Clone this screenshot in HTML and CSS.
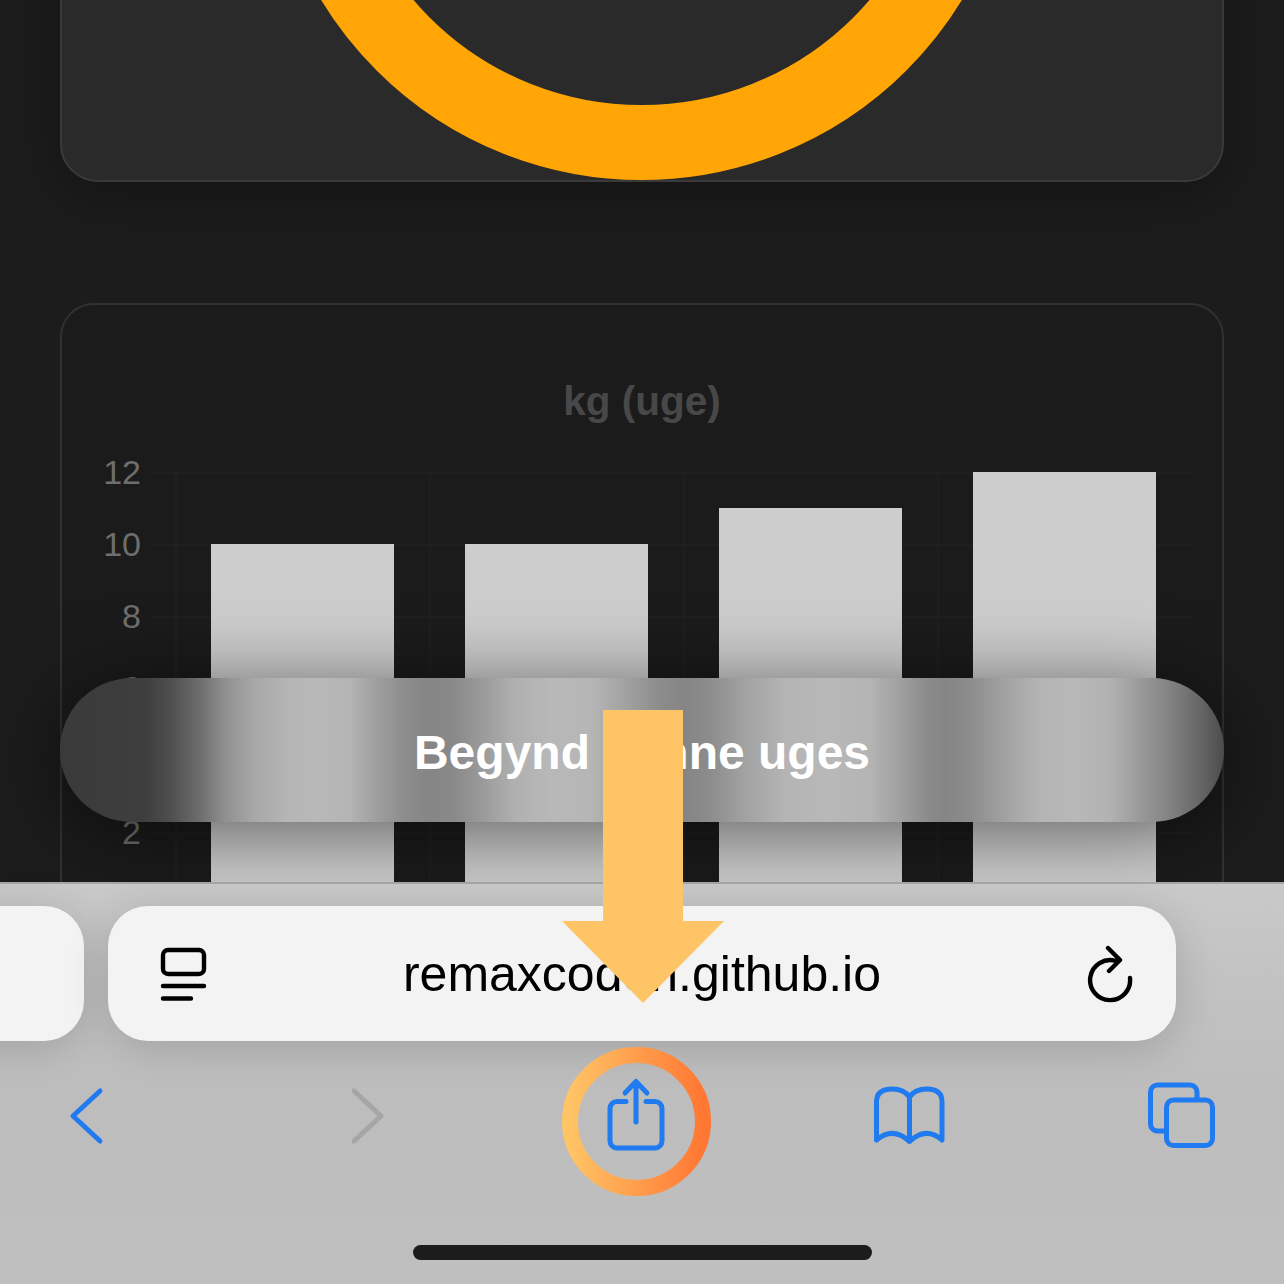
FILE: index.html
```html
<!DOCTYPE html>
<html lang="da">
<head>
<meta charset="utf-8">
<title>Begynd denne uges</title>
<link rel="stylesheet" href="styles.css">
</head>
<body>
<div class="screen">
  <main class="content">
    <section class="card ring-card">
      <svg class="ring" viewBox="0 0 750 750" aria-hidden="true">
        <circle cx="374.5" cy="375" r="337.5" class="ring-stroke"/>
      </svg>
    </section>
    <section class="card chart-card">
      <h2 class="chart-title">kg (uge)</h2>
      <div class="chart">
        <div class="axis">
          <span class="tick">12</span>
          <span class="tick">10</span>
          <span class="tick">8</span>
          <span class="tick">6</span>
          <span class="tick">4</span>
          <span class="tick">2</span>
          <span class="tick">0</span>
        </div>
        <div class="grid-lines">
          <div class="plot">
            <div class="bar" style="height:360px"></div>
            <div class="bar" style="height:360px"></div>
            <div class="bar" style="height:396px"></div>
            <div class="bar" style="height:432px"></div>
          </div>
        </div>
      </div>
    </section>
  </main>

  <button class="cta"><span class="cta-label">Begynd denne uges</span></button>

  <footer class="toolbar">
    <div class="address-row">
      <div class="pill pill-side"></div>
      <div class="pill pill-main">
        <svg class="ico-reader" viewBox="159 946 50 56" aria-hidden="true">
          <rect x="163" y="950" width="41" height="24" rx="5" class="ink"/>
          <path d="M163 986H204M163 998.5H191" class="ink"/>
        </svg>
        <span class="url">remaxcoden.github.io</span>
        <svg class="ico-reload" viewBox="1084 942 50 58" aria-hidden="true">
          <path d="M1130 975A20 20 0 1 1 1116 958L1120 957M1108 945L1120 957L1109 968" class="ink"/>
        </svg>
      </div>
    </div>
    <nav class="nav-row">
      <svg class="nav-cell" width="173" height="149" viewBox="0 1047 173 149" aria-hidden="true">
        <path d="M100 1091L73 1116L100 1141" class="blue"/>
      </svg>
      <svg class="nav-cell" width="389" height="149" viewBox="173 1047 389 149" aria-hidden="true">
        <path d="M354 1091L381 1116L354 1141" class="grey"/>
      </svg>
      <svg class="nav-cell" width="149" height="149" viewBox="562 1047 149 149" aria-hidden="true">
        <defs>
          <linearGradient id="ringGrad" x1="0" x2="1" y1="0" y2="0">
            <stop offset="0" stop-color="#ffc466"/>
            <stop offset="1" stop-color="#ff7733"/>
          </linearGradient>
        </defs>
        <circle cx="636.5" cy="1121.5" r="66.5" fill="none" stroke="url(#ringGrad)" stroke-width="16"/>
        <path d="M626 1101.5H617a7 7 0 0 0-7 7V1141a7 7 0 0 0 7 7H655a7 7 0 0 0 7-7V1108.5a7 7 0 0 0-7-7H646" class="blue"/>
        <path d="M636 1122V1082M625 1093L636 1081.5L647 1093" class="blue"/>
      </svg>
      <svg class="nav-cell" width="396" height="149" viewBox="711 1047 396 149" aria-hidden="true">
        <path d="M876.5 1140V1102Q876.5 1089 892 1089Q904 1089 909.5 1097V1141.5M876.5 1140Q893 1126 909.5 1141.5Q926 1126 942 1140V1102Q942 1089 927 1089Q915 1089 909.5 1097" class="blue"/>
      </svg>
      <svg class="nav-cell" width="149" height="149" viewBox="1107 1047 149 149" aria-hidden="true">
        <rect x="1166.5" y="1100" width="46" height="45.5" rx="7" class="blue"/>
        <path d="M1197 1098V1092a7 7 0 0 0-7-7H1157.500a7 7 0 0 0-7 7V1124a7 7 0 0 0 7 7H1164" class="blue"/>
      </svg>
    </nav>
    <div class="home-bar"></div>
  </footer>

  <svg class="pointer" viewBox="0 0 162 293" aria-hidden="true">
    <polygon points="41,0 121,0 121,211 162,211 81,293 0,211 41,211"/>
  </svg>
</div>
</body>
</html>
```
FILE: styles.css
```css
* { box-sizing: border-box; }

html, body {
  margin: 0;
  padding: 0;
  background: #1c1c1c;
}

.screen {
  position: relative;
  width: 1284px;
  height: 1284px;
  overflow: hidden;
  font-family: "Liberation Sans", Arial, sans-serif;
}

.content {
  display: flex;
  flex-direction: column;
  gap: 121px;
  padding: 0 60px;
}

.card {
  border: 2px solid #3a3a3a;
  border-radius: 38px;
}

.ring-card {
  display: flex;
  justify-content: center;
  align-items: flex-end;
  height: 300px;
  margin-top: -118px;
  overflow: hidden;
  background: #2a2a2a;
  box-shadow: 0 12px 60px rgba(0, 0, 0, 0.3);
}

.ring {
  flex: none;
  width: 750px;
  height: 750px;
}

.ring-stroke {
  fill: none;
  stroke: #ffa505;
  stroke-width: 75;
}

.chart-card {
  height: 1000px;
  padding-top: 73px;
  border-color: #313131;
  border-radius: 34px;
  background: #1b1b1b;
}

.chart-title {
  margin: 0;
  font-size: 40.5px;
  line-height: 46px;
  font-weight: 700;
  text-align: center;
  color: #484848;
}

.chart {
  display: flex;
  align-items: flex-start;
  margin-top: 48px;
}

.axis {
  display: flex;
  flex-direction: column;
  width: 79px;
  margin-top: -36px;
}

.tick {
  height: 72px;
  font-size: 34px;
  line-height: 72px;
  text-align: right;
  color: #6e6e6e;
}

.grid-lines {
  width: 1041px;
  margin-left: 9px;
  padding-left: 25px;
  background-image: linear-gradient(to bottom, #1f1f1f 2px, transparent 2px);
  background-size: 100% 72px;
}

.plot {
  display: grid;
  grid-template-columns: repeat(4, 254px);
  align-items: end;
  justify-items: center;
  width: 1016px;
  height: 432px;
  background-image: linear-gradient(to right, #1f1f1f 2px, transparent 2px);
  background-size: 254px 100%;
}

.bar {
  width: 183px;
  background: #cdcdcd;
}

.cta {
  position: absolute;
  top: 678px;
  left: 60px;
  width: 1164px;
  height: 144px;
  border: 0;
  border-radius: 72px;
  font-family: inherit;
  font-size: 48px;
  font-weight: 700;
  color: #fff;
  background: linear-gradient(to right,
    #3a3a3a 0, #3e3e3e 85px, #4e4e4e 110px, #6d6d6d 140px, #909090 165px, #a8a8a8 195px, #b6b6b6 230px, #b8b8b8 260px, #b4b4b4 290px,
    #a0a0a0 315px, #8c8c8c 345px, #858585 370px, #8a8a8a 395px, #9c9c9c 425px, #b0b0b0 455px, #b8b8b8 490px, #b6b6b6 530px,
    #a2a2a2 565px, #8c8c8c 600px, #858585 625px, #8c8c8c 650px, #a2a2a2 685px, #b4b4b4 725px, #b8b8b8 770px, #b4b4b4 810px,
    #a0a0a0 840px, #8b8b8b 868px, #858585 885px, #8c8c8c 910px, #a2a2a2 945px, #b4b4b4 980px, #b8b8b8 1015px, #b2b2b2 1050px,
    #9a9a9a 1080px, #7e7e7e 1115px, #666 1140px, #4c4c4c 1164px);
  box-shadow: 0 10px 80px rgba(0, 0, 0, 0.55);
}

.cta-label {
  position: relative;
  top: 2px;
}

.toolbar {
  position: absolute;
  left: 0;
  right: 0;
  bottom: 0;
  height: 402px;
  padding-top: 22px;
  border-top: 2px solid #a6a6a6;
  background: linear-gradient(to bottom, #c9c9c9 0, #c2c2c2 100px, #bdbdbd 220px, #bfbfbf 100%);
}

.address-row {
  display: flex;
  gap: 24px;
  height: 135px;
  margin-left: -60px;
}

.pill {
  border-radius: 40px;
  background: #f3f3f3;
  box-shadow: 0 8px 44px rgba(0, 0, 0, 0.16);
}

.pill-side {
  width: 144px;
}

.pill-main {
  display: grid;
  grid-template-columns: 1fr auto 1fr;
  align-items: center;
  width: 1068px;
  padding: 0 42px;
}

.url {
  font-size: 50px;
  color: #000;
}

.ico-reader {
  width: 50px;
  height: 56px;
  margin-left: 9px;
}

.ico-reload {
  justify-self: end;
  width: 50px;
  height: 58px;
}

.ink {
  fill: none;
  stroke: #000;
  stroke-width: 4.4;
  stroke-linecap: round;
  stroke-linejoin: round;
}

.nav-row {
  display: grid;
  grid-template-columns: 173px 389px 149px 396px 149px;
  margin-top: 6px;
}

.nav-cell {
  display: block;
}

.blue,
.grey {
  fill: none;
  stroke: #1f7bef;
  stroke-width: 5;
  stroke-linecap: round;
  stroke-linejoin: round;
}

.grey {
  stroke: #a5a5a5;
}

.home-bar {
  width: 459px;
  height: 15px;
  margin: 49px 0 0 413px;
  border-radius: 8px;
  background: #1c1c1c;
}

.pointer {
  position: absolute;
  left: 562px;
  top: 710px;
  width: 162px;
  height: 293px;
  fill: #ffc466;
}
```
